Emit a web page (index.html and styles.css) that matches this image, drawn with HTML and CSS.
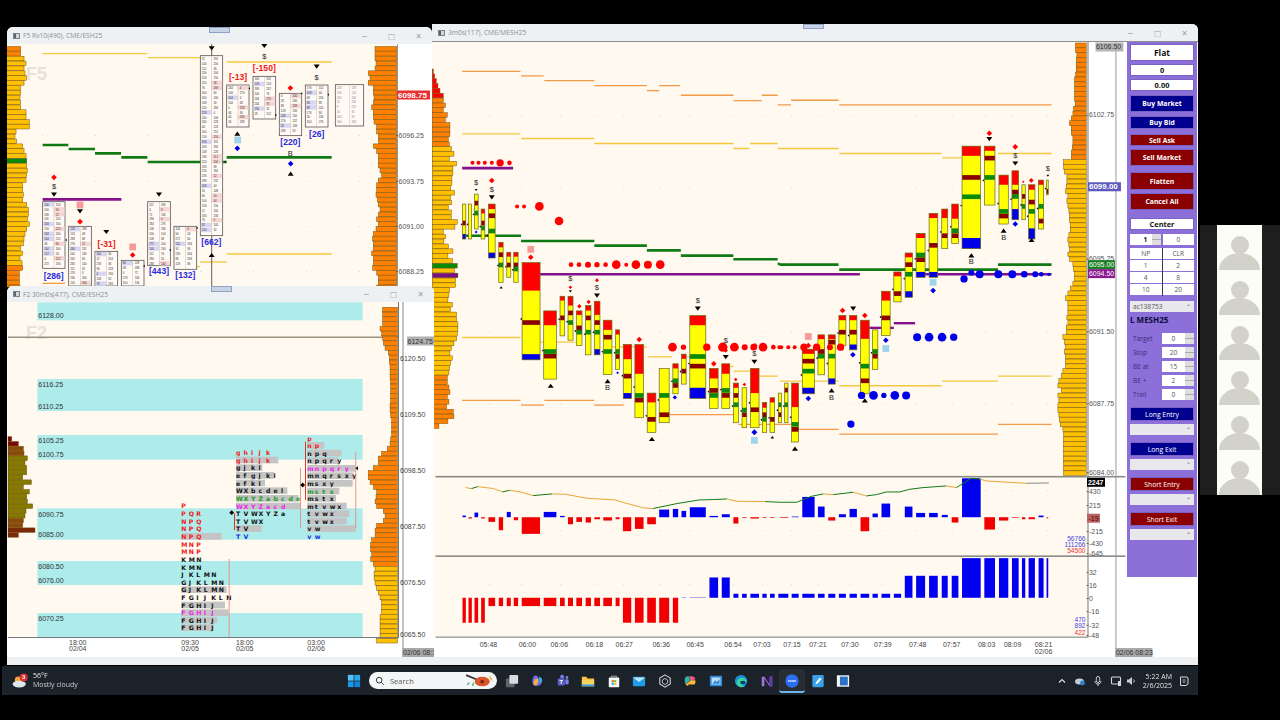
FILE: index.html
```html
<!DOCTYPE html>
<html lang="en">
<head>
<meta charset="utf-8">
<title>Trading workspace</title>
<link rel="stylesheet" href="styles.css">
</head>
<body>
<div class="screen">
  <div class="workspace">
    <section class="win win-main">
      <header class="title"><span class="win-ic"></span><span class="win-name">3m0s(117), CME/MESH25</span><span class="ctl">−</span><span class="ctl">□</span><span class="ctl">×</span><i class="grip"></i></header>
      <div class="win-body">
        <svg class="chart chart-main" id="chart-main" viewBox="432 41 695 616"></svg>
        <aside class="panel">
          <div class="box big">Flat</div>
          <div class="box mt3">0</div>
          <div class="box mt3">0.00</div>
          <div class="btn navy h17 mt4">Buy Market</div>
          <div class="btn navy h13 mt4">Buy Bid</div>
          <div class="btn wine h12 mt5">Sell Ask</div>
          <div class="btn wine h17 mt3">Sell Market</div>
          <div class="btn wine h18 mt6">Flatten</div>
          <div class="btn wine h17 mt3">Cancel All</div>
          <div class="box mt8">Center</div>
          <div class="qty mt4"><div class="cell strong">1<span class="spin"></span></div><div class="cell">0</div></div>
          <div class="qtygrid mt2">
            <div class="cell">NP</div><div class="cell">CLR</div>
            <div class="cell">1</div><div class="cell">2</div>
            <div class="cell">4</div><div class="cell">8</div>
            <div class="cell">10</div><div class="cell">20</div>
          </div>
          <div class="select mt5">ac138753<span class="caret">⌄</span></div>
          <div class="symbol mt3">L MESH25</div>
          <div class="params mt8">
            <div class="param"><label>Target</label><div class="num">0<span class="spin"></span></div></div>
            <div class="param"><label>Stop</label><div class="num">20<span class="spin"></span></div></div>
            <div class="param"><label>BE at</label><div class="num">15<span class="spin"></span></div></div>
            <div class="param"><label>BE +</label><div class="num">2<span class="spin"></span></div></div>
            <div class="param"><label>Trail</label><div class="num">0<span class="spin"></span></div></div>
          </div>
          <div class="btn plain navy h14 mt7">Long Entry</div>
          <div class="select mt3"><span class="caret">⌄</span></div>
          <div class="btn plain navy h14 mt7">Long Exit</div>
          <div class="select mt3"><span class="caret">⌄</span></div>
          <div class="btn plain wine h14 mt7">Short Entry</div>
          <div class="select mt3"><span class="caret">⌄</span></div>
          <div class="btn plain wine h14 mt7">Short Exit</div>
          <div class="select mt3"><span class="caret">⌄</span></div>
        </aside>
      </div>
      <div class="hscroll"></div>
    </section>

    <section class="win win-f5">
      <header class="title"><span class="win-ic"></span><span class="win-name">F5 Rv10(490), CME/ESH25</span><span class="ctl">−</span><span class="ctl">□</span><span class="ctl">×</span><i class="grip"></i></header>
      <svg class="chart chart-f5" id="chart-f5" viewBox="7 44 425 243"></svg>
    </section>

    <section class="win win-f2">
      <header class="title"><span class="win-ic"></span><span class="win-name">F2 30m0s(477), CME/ESH25</span><span class="ctl">−</span><span class="ctl">□</span><span class="ctl">×</span><i class="grip"></i></header>
      <svg class="chart chart-f2" id="chart-f2" viewBox="7 302 427 355"></svg>
      <div class="hscroll"></div>
    </section>
  </div>

  <footer class="taskbar">
    <div class="weather">
      <svg class="wx-ic" viewBox="0 0 20 18"><circle cx="7" cy="8" r="4" fill="#f2a93b"/><ellipse cx="8" cy="12.500" rx="7.500" ry="3.800" fill="#dfe6ee"/><circle cx="13" cy="5" r="4.500" fill="#d8322e"/><text x="13" y="7.300" class="wx-badge">3</text></svg>
      <div class="wx-text"><span>56°F</span><span class="dim">Mostly cloudy</span></div>
    </div>
    <div class="center-icons">
      <svg class="tb win-logo" viewBox="0 0 16 16"><rect x="1" y="1" width="6.600" height="6.600" fill="#4fc3f7"/><rect x="8.400" y="1" width="6.600" height="6.600" fill="#29a8ee"/><rect x="1" y="8.400" width="6.600" height="6.600" fill="#1e96e6"/><rect x="8.400" y="8.400" width="6.600" height="6.600" fill="#1484d8"/></svg>
      <div class="search">
        <svg class="mag" viewBox="0 0 12 12"><circle cx="5" cy="5" r="3.400" fill="none" stroke="#333" stroke-width="1.200"/><path d="M7.500 7.500 10.500 10.500" stroke="#333" stroke-width="1.200"/></svg>
        <span>Search</span>
        <svg class="doodle" viewBox="0 0 28 14"><path d="M2 2 12 6" stroke="#333" stroke-width="1.600"/><ellipse cx="17" cy="8" rx="7" ry="4.400" fill="#d9572b"/><circle cx="17" cy="8" r="1.800" fill="#7a2b12"/><path d="M3 11l2-2M8 12l1-3" stroke="#3a7" stroke-width="1.200"/><path d="M24 3l2 4" stroke="#f0b13c" stroke-width="1.400"/></svg>
      </div>
      <svg class="tb" viewBox="0 0 16 16"><rect x="1" y="5" width="10" height="10" rx="1" fill="#5e6368"/><rect x="5" y="1" width="10" height="10" rx="1" fill="#d8dadd"/></svg>
      <svg class="tb" viewBox="0 0 16 16"><path d="M5 2c3-1 4 1 5 4l2-2c3 2 2 6 0 8-2 2-5 2-7 1C2 12 2 5 5 2z" fill="#7a6cf0"/><path d="M4 11c0-4 2-6 5-6 1 3 0 7-3 8-1 0-2-1-2-2z" fill="#f2b13b"/><path d="M10 3c2 0 4 2 4 5l-3 2z" fill="#2bb3d6"/></svg>
      <svg class="tb" viewBox="0 0 16 16"><rect x="2" y="5" width="8" height="8" rx="1" fill="#5b5fc7"/><circle cx="7" cy="3" r="2.200" fill="#7b83eb"/><circle cx="12.500" cy="4" r="1.600" fill="#7b83eb"/><rect x="10.500" y="6" width="4" height="6" rx="1.600" fill="#7b83eb"/><text x="6" y="11.500" class="tb-letter">T</text></svg>
      <svg class="tb" viewBox="0 0 16 16"><path d="M1 3h5l1.600 2H15v9H1z" fill="#f6c343"/><rect x="1" y="7" width="14" height="7" fill="#fbd35c"/><rect x="1" y="12" width="14" height="2" fill="#2a9df4"/></svg>
      <svg class="tb" viewBox="0 0 16 16"><path d="M5 4V2.500h6V4" fill="none" stroke="#bbb" stroke-width="1"/><rect x="2" y="4" width="12" height="11" rx="1" fill="#f4f5f6"/><rect x="5.400" y="7" width="2.300" height="2.300" fill="#e8542a"/><rect x="8.300" y="7" width="2.300" height="2.300" fill="#7fba00"/><rect x="5.400" y="10" width="2.300" height="2.300" fill="#00a4ef"/><rect x="8.300" y="10" width="2.300" height="2.300" fill="#ffb900"/></svg>
      <svg class="tb" viewBox="0 0 16 16"><rect x="1" y="3" width="14" height="11" rx="1.400" fill="#1f9de8"/><path d="M1 4l7 5 7-5" fill="#bfe6fb"/></svg>
      <svg class="tb" viewBox="0 0 16 16"><path d="M8 1l6 3.500v7L8 15l-6-3.500v-7z" fill="none" stroke="#cfd3d8" stroke-width="1.200"/><path d="M8 5l3 1.800v3.400L8 12 5 10.200V6.800z" fill="none" stroke="#cfd3d8" stroke-width="1"/></svg>
      <svg class="tb" viewBox="0 0 16 16"><path d="M2 6c0-3 3-4 5-3l1 4-5 5c-1-2-1-4-1-6z" fill="#2fb4a7"/><path d="M7 3c3-1 7 0 7 3l-5 2z" fill="#f05a7e"/><path d="M3 12l6-5 5 0c1 3-1 7-5 7-3 0-5-1-6-2z" fill="#f6b73c"/><rect x="6" y="12" width="8" height="2.400" fill="#222"/></svg>
      <svg class="tb" viewBox="0 0 16 16"><rect x="1" y="2" width="14" height="12" rx="1" fill="#2e88d8"/><rect x="3" y="4" width="10" height="8" fill="#bcdcf5"/><path d="M4 11l3-4 2 2 3-3v5z" fill="#2e88d8"/></svg>
      <svg class="tb" viewBox="0 0 16 16"><circle cx="8" cy="8" r="7" fill="#1c8ed8"/><path d="M3 9c1-4 5-6 9-4 2 1 3 3 3 4-2-1-5-1-6 1s1 4 4 4c-1 1-3 1-4 1-4 0-6-3-6-6z" fill="#38d39f"/><ellipse cx="10" cy="9.600" rx="3" ry="1.800" fill="#0b3a66"/></svg>
      <svg class="tb" viewBox="0 0 16 16"><path d="M2 3h3l6 9V3h3v11h-3L5 5v9H2z" fill="#a06fd8"/><path d="M11 3l3-1v12l-3 1z" fill="#5e3aa8"/></svg>
      <div class="tb-active"><svg class="tb" viewBox="0 0 16 16"><circle cx="8" cy="8" r="7.600" fill="#2d6df0"/><text x="8" y="9.400" class="tb-zoom">zoom</text></svg></div>
      <svg class="tb" viewBox="0 0 16 16"><rect x="1.500" y="1" width="13" height="14" rx="1.500" fill="#3aa0e8"/><path d="M5 12l1-3 4-5 2 1.600-4 5z" fill="#fff"/></svg>
      <svg class="tb" viewBox="0 0 16 16"><rect x="1" y="1.500" width="14" height="13" fill="#f6f7f8"/><rect x="4.500" y="3" width="9" height="10" fill="#2a74c8"/></svg>
    </div>
    <div class="tray">
      <svg class="tr-ic" viewBox="0 0 12 12"><path d="M3 7.500 6 4.500 9 7.500" fill="none" stroke="#ddd" stroke-width="1.200"/></svg>
      <svg class="tr-ic" viewBox="0 0 12 12"><ellipse cx="5.500" cy="6.500" rx="4.500" ry="3" fill="#c6cbd1"/><circle cx="8.500" cy="8" r="2.400" fill="#2a84d2"/></svg>
      <svg class="tr-ic" viewBox="0 0 12 12"><rect x="4.300" y="1.500" width="3.400" height="6" rx="1.700" fill="none" stroke="#c9ced4" stroke-width="1"/><path d="M3 6c0 4 6 4 6 0M6 9v2" fill="none" stroke="#c9ced4" stroke-width="1"/></svg>
      <svg class="tr-ic" viewBox="0 0 12 12"><rect x="1.500" y="2" width="9" height="7" rx="1" fill="none" stroke="#d5d9de" stroke-width="1.100"/><rect x="8" y="6" width="3" height="5" fill="#d5d9de"/></svg>
      <svg class="tr-ic narrow" viewBox="0 0 12 12"><path d="M2 4.500h2l3-2.500v8l-3-2.500H2z" fill="#c9ced4"/><path d="M8.500 4.500c1 1 1 2 0 3" fill="none" stroke="#c9ced4"/></svg>
      <div class="clock"><span>5:22 AM</span><span>2/6/2025</span></div>
      <svg class="tr-ic" viewBox="0 0 12 12"><path d="M2.500 2h6.500l1 1v6l-2 1.500h-5.500z" fill="none" stroke="#d5d9de" stroke-width="1"/><path d="M4.500 5h3M4.500 7h3" stroke="#d5d9de" stroke-width=".8"/></svg>
    </div>
  </footer>

  <div class="gallery">
    <div class="tile"><i class="head"></i><i class="body-shape"></i></div>
    <div class="tile"><i class="head"></i><i class="body-shape"></i></div>
    <div class="tile"><i class="head"></i><i class="body-shape"></i></div>
    <div class="tile"><i class="head"></i><i class="body-shape"></i></div>
    <div class="tile"><i class="head"></i><i class="body-shape"></i></div>
    <div class="tile"><i class="head"></i><i class="body-shape"></i></div>
  </div>
</div>
<script src="charts.js"></script>
</body>
</html>
```

FILE: styles.css
```css
* { box-sizing: border-box; }
html, body { margin: 0; height: 100%; background: #000; overflow: hidden; }
body { font-family: "Open Sans", "Liberation Sans", sans-serif; }

.screen { position: relative; width: 1280px; height: 720px; padding-top: 24px; filter: blur(.4px); }
.workspace { position: relative; width: 1198px; height: 642px; }

.win { position: absolute; display: flex; flex-direction: column; background: #fff; overflow: hidden; }
.win-main { left: 432px; top: 0; width: 766px; height: 641px; border-radius: 0 6px 0 0; }
.win-f5 { left: 7px; top: 3px; width: 425px; height: 260px; border-radius: 6px 6px 0 0; }
.win-f2 { left: 7px; top: 262px; width: 427px; height: 379px; border-radius: 6px 6px 0 0; }

.title { position: relative; flex: none; display: flex; align-items: center; height: 17px; padding-left: 6px; background: #eef1f3; color: #8b8f93; font-size: 6.700px; }
.win-main .title { border-bottom: 1.500px solid #8e8e8e; height: 18px; }
.win-f2 .title { height: 16px; }
.win-ic { width: 7px; height: 6px; margin-right: 3px; background: linear-gradient(90deg, #55686f 45%, #cfd6da 45%); border: 1px solid #7b8488; }
.win-name { flex: 1; }
.ctl { width: 27px; text-align: center; font-size: 10px; line-height: 1; color: #9a9da0; }
.grip { position: absolute; top: 0; left: 202px; width: 21px; height: 6px; background: #c9d3e6; border: 1px solid #8fa0c4; }
.win-main .grip { left: 371px; height: 5px; }
.win-f2 .grip { left: 204px; }

.win-body { position: relative; display: flex; flex: 1; min-height: 0; }
.chart { display: block; overflow: visible; flex: none; background: #fff; }
.chart-main { width: 695px; height: 615px; }
.chart-f5 { width: 425px; height: 243px; }
.chart-f2 { width: 427px; height: 355px; }
.chart text { font-family: "Liberation Sans", sans-serif; }
.chart text.tpo { font-family: "DejaVu Sans", sans-serif; font-weight: 700; font-size: 6.200px; }
.hscroll { flex: none; height: 8px; background: #eef0f1; }

.panel { flex: none; display: flex; flex-direction: column; width: 70px; height: 535px; padding: 2px 3px 0; background: #8c6fd9; font-size: 7px; }
.mt2 { margin-top: 2px; } .mt3 { margin-top: 3px; } .mt4 { margin-top: 4px; } .mt5 { margin-top: 5px; }
.mt6 { margin-top: 6px; } .mt7 { margin-top: 7px; } .mt8 { margin-top: 8px; }
.h12 { height: 12px; } .h13 { height: 13px; } .h14 { height: 14px; } .h17 { height: 17px; } .h18 { height: 18px; }
.box { display: flex; align-items: center; justify-content: center; height: 12px; background: #fff; border: 1px solid #7a62c4; color: #111; font-weight: 700; font-size: 7.400px; }
.box.big { height: 17px; font-size: 8.500px; }
.btn { display: flex; align-items: center; justify-content: center; color: #fff; font-weight: 700; font-size: 6.800px; border: 1px solid #7a62c4; }
.btn.plain { font-weight: 400; }
.navy { background: #00008f; }
.wine { background: #8b0000; }
.qty { display: grid; grid-template-columns: 1fr 1fr; column-gap: 2px; height: 12px; }
.qtygrid { display: grid; grid-template-columns: 1fr 1fr; grid-auto-rows: 12px; column-gap: 1px; background: #3a3a5a; border-radius: 1px; }
.cell { position: relative; display: flex; align-items: center; justify-content: center; background: #fff; border-bottom: 1px solid #8c6fd9; color: #555; font-size: 6.600px; }
.cell.strong { color: #111; font-weight: 700; }
.spin { position: absolute; right: 0; top: 0; bottom: 0; width: 9px; background: linear-gradient(#dedede 0 48%, #aaa 48% 54%, #dedede 54%); }
.select { position: relative; display: flex; align-items: center; height: 11px; padding-left: 3px; background: #e8e8ec; color: #555; font-size: 6.600px; }
.caret { position: absolute; right: 3px; top: -1px; font-size: 6px; color: #666; }
.symbol { height: 10px; line-height: 10px; color: #0c0c3a; font-weight: 700; font-size: 8px; }
.params { display: flex; flex-direction: column; gap: 3px; }
.param { display: flex; align-items: center; justify-content: space-between; height: 11px; padding-left: 3px; color: #3c2d78; font-size: 6.600px; }
.num { position: relative; width: 32px; height: 11px; padding-right: 9px; background: #fff; color: #555; text-align: center; line-height: 11px; }

.taskbar { display: flex; align-items: center; justify-content: space-between; width: 1196px; height: 29px; margin-left: 2px; padding-right: 8px; background: #1c2229; color: #e6e8ea; font-size: 7px; position: relative; }
.weather { display: flex; align-items: center; gap: 3px; width: 345px; padding-left: 10px; }
.wx-ic { width: 18px; height: 16px; }
.wx-badge { font: 700 6.500px "Liberation Sans", sans-serif; fill: #fff; text-anchor: middle; }
.wx-text { display: flex; flex-direction: column; line-height: 8.500px; }
.dim { color: #c8ccd0; }
.center-icons { display: flex; align-items: center; gap: 11.500px; flex: none; }
.tb { display: block; width: 14px; height: 14px; flex: none; }
.win-logo { margin-right: -3.500px; }
.search { display: flex; align-items: center; width: 128px; height: 17px; margin-right: -4px; padding: 0 3px 0 6px; border-radius: 9px; background: #f4f5f6; color: #555; font-size: 7.500px; }
.mag { width: 10px; height: 10px; margin-right: 5px; }
.search span { flex: 1; }
.doodle { width: 30px; height: 15px; }
.tb-letter { font: 700 6.500px "Liberation Sans", sans-serif; fill: #fff; text-anchor: middle; }
.tb-zoom { font: 700 3.600px "Liberation Sans", sans-serif; fill: #fff; text-anchor: middle; }
.tb-active { position: relative; padding: 5px 6px 3px; margin: 0 -6px; background: #272d33; border-radius: 3px; border-bottom: 2px solid #6fb4ea; }
.tray { display: flex; align-items: center; gap: 6px; margin-left: auto; }
.tr-ic { width: 12px; height: 12px; flex: none; }
.tr-ic.narrow { margin-left: -3px; }
.clock { display: flex; flex-direction: column; align-items: flex-end; line-height: 9px; color: #dfe2e5; font-size: 7px; }

.gallery { position: absolute; left: 1200px; top: 225px; width: 80px; height: 270px; padding-left: 17px; background: #1e1e1e; }
.tile { position: relative; width: 45px; height: 45px; background: #fdfdf7; overflow: hidden; }
.head { position: absolute; left: 14px; top: 11px; width: 18px; height: 18px; border-radius: 50%; background: #d2d2ca; }
.body-shape { position: absolute; left: 2px; top: 28px; width: 41px; height: 30px; border-radius: 50% 50% 0 0 / 56% 56% 0 0; background: #d2d2ca; }
```

FILE: charts.js
```js
// Draws the three charts from their data tables. All coordinates are given in the
// reference's own 3x scale relative to a zone origin, or in plain page pixels.
const Y = '#ffff00', R = '#ff0000', M = '#8b0000', G = '#0a8a0a', B = '#0000e6';
const ORG = '#ff8000', GLD = '#ffc000', BG = '#fff9f0';
const LO = '#f29a48', LY = '#f6c840', LG = '#0f7a14', LP = '#85108c';
const zone = (ox, oy) => ({ x: v => +(ox + v / 3).toFixed(2), y: v => +(oy + v / 3).toFixed(2), s: v => +(v / 3).toFixed(2) });
const Z1 = zone(0, 20), Z2 = zone(0, 285), Z3 = zone(430, 20), Z4 = zone(780, 20),
      Z5 = zone(430, 250), Z6 = zone(780, 250), Z7 = zone(430, 470), Z8 = zone(780, 470);

const rect = (x, y, w, h, f, st, sw = .5) => `<rect x="${x}" y="${y}" width="${w}" height="${h}" fill="${f}"${st ? ` stroke="${st}" stroke-width="${sw}"` : ''}/>`;
const txt = (x, y, s, size, f, o = {}) => `<text x="${x}" y="${y}" font-size="${size}" fill="${f}"${o.b ? ' font-weight="700"' : ''}${o.a ? ` text-anchor="${o.a}"` : ''}>${s}</text>`;
const line = (x1, y1, x2, y2, c, w) => `<line x1="${x1}" y1="${y1}" x2="${x2}" y2="${y2}" stroke="${c}" stroke-width="${w}"/>`;
const hl = (z, list, c, w) => list.map(([a, b, y]) => line(z.x(a), z.y(y), z.x(b), z.y(y), c, w)).join('');
const dots = (z, list, c) => list.map(([x, y, r]) => `<circle cx="${z.x(x)}" cy="${z.y(y)}" r="${z.s(r + 1)}" fill="${c}"/>`).join('');
const poly = (pts, f) => `<polygon points="${pts.map(p => p.join(',')).join(' ')}" fill="${f}"/>`;
const dia = (z, list, c, size = 2.8) => list.map(([x, y, s]) => { const r = s || size, X = z.x(x), Y0 = z.y(y); return poly([[X, Y0 - r], [X + r, Y0], [X, Y0 + r], [X - r, Y0]], c); }).join('');
const up = (z, list, size = 3) => list.map(([x, y, s]) => { const r = s || size, X = z.x(x), Y0 = z.y(y); return poly([[X - r, Y0 + r * .7], [X + r, Y0 + r * .7], [X, Y0 - r * .7]], '#000'); }).join('');
const down = (z, list, size = 3) => list.map(([x, y, s]) => { const r = s || size, X = z.x(x), Y0 = z.y(y); return poly([[X - r, Y0 - r * .7], [X + r, Y0 - r * .7], [X, Y0 + r * .7]], '#000'); }).join('');
const sq = (z, list, c, r = 3.4) => list.map(([x, y]) => rect(z.x(x) - r, z.y(y) - r, 2 * r, 2 * r, c)).join('');
const mark = (z, list, s) => list.map(([x, y]) => txt(z.x(x), z.y(y) + 2.8, s, 7.5, '#222', { a: 'middle' })).join('');
const grid = (xs, ys) => ys.map(y => xs.map(x => rect(x, y, 1, 1, '#d9d6cf')).join('')).join('');

function candle(z, [x1, x2, t, b, red, blue, mar = [], grn = []]) {
  const X = z.x(x1), W = z.s(x2 - x1), band = (y, h, c) => rect(X, z.y(y), W, z.s(h), c);
  let s = rect(X, z.y(t), W, z.s(b - t), Y);
  if (red) s += band(t, red - t, R);
  if (blue) s += band(blue, b - blue, B);
  mar.forEach(y => s += band(y, 14, M));
  grn.forEach(y => s += band(y, 14, G));
  s += rect(X, z.y(t), W, z.s(b - t), 'none', '#6a6820', .7);
  const my = z.y(t + (b - t) * .58);
  s += poly([[X - 2, my], [X - .4, my - 1.2], [X - .4, my + 1.2]], '#000');
  return s;
}

const PS = '#6a4a00';
function barsFromLeft(x0, y0, step, edges, scale, color) {
  return edges.map((e, i) => rect(x0, +(y0 + i * step).toFixed(2), +(e * scale).toFixed(2), +(step - .3).toFixed(2), color(i), PS, .45)).join('');
}
function barsFromRight(xr, y0, step, widths, color) {
  return widths.map((w, i) => { const px = +(w / 3).toFixed(2); return rect(+(xr - px).toFixed(2), +(y0 + i * step).toFixed(2), px, +(step - .3).toFixed(2), color(i), PS, .45); }).join('');
}
const pxBox = (x, y, w, s, bg, fg, o = {}) => rect(x, y - 4.5, w, 9, bg) + txt(x + 1, y + 2.5, s, o.size || 7, fg, o);
const axisLabel = (x, y, s) => rect(x - 2, y, 2, .8, '#555') + txt(x + .5, y + 2.5, s, 7, '#555');

/* ---------------- main chart ---------------- */
function drawMain() {
  let s = rect(432, 41, 695, 616, '#fff') + rect(432, 41, 656, 596, BG);

  // left volume profile
  const lp = [8,12,17,22,28,38, 38,44,38,50,44,58,58,58,53,56, 62,70,56,78,67,67,64,64,60,72,60,63,53,62,62,80,73,38,45,40,53,67,
    52,65,80,72,82,75,75,57,55,52,65,60,78,78,82,82,80,78,70,62,58,65,60,57,55, 50,50,55,58,50,55,48,68,70,52,25];
  s += barsFromLeft(431.7, 68, 4.87, lp.map(e => e - 5), 1 / 3, i => i < 6 ? '#ff0000' : i < 16 ? ORG : i === 40 ? G : i === 42 ? '#7a0f88' : i < 63 ? GLD : ORG);

  // right volume profile
  const rp = [888,888,892,890,890,890,888,885,885,885,885,885,887,882,880,875,870,875,875,880,880,878,875,875,
    852,852,855,862,862,860,858,865,862,865,868,870,870,872,872,868,865, 868,870,865,870,880,882,885,885,880,872,865,858,865,865,865,862,865,860,860,850,855,858,855,858,858,858,850,845,838,835,845,835,838,835,835,838,840,842,850,852,852,852,852,852,852,852,852,852].map(e => 920 - e);
  s += barsFromRight(1086.7, 42, 4.87, rp, i => i < 24 ? ORG : GLD);

  const xs = [489, 521, 560, 594, 623, 659, 689, 733, 762, 791, 818, 850, 882, 916, 952, 985, 1012, 1047];
  s += grid(xs, [114, 186, 258, 331, 403, 490, 530, 584]);

  // levels
  s += hl(Z3, [[95,270,151],[272,340,165],[342,492,179],[492,650,194],[650,687,209],[687,750,194],[752,910,223],[910,995,239],[995,1043,223],[1043,1050,252]], LO, 1.3);
  s += hl(Z4, [[0,33,252],[33,176,238],[178,816,252]], LO, 1.3);
  s += hl(Z3, [[95,270,339],[272,492,353],[492,910,368],[910,958,383],[960,1043,368],[1043,1050,383]], LY, 1.3);
  s += hl(Z4, [[0,176,383],[178,485,398],[487,545,411],[655,816,398]], LY, 1.3);
  s += hl(Z5, [[95,270,261],[330,435,275],[545,650,289],[652,725,319],[770,779,319],[900,910,348],[910,960,362],[985,1043,377]], LY, 1.3);
  s += hl(Z6, [[0,176,392],[178,485,406],[487,655,392],[655,816,377]], LY, 1.3);
  s += hl(Z5, [[95,270,450],[272,340,464],[342,492,450],[492,580,464],[717,910,493],[925,1050,522]], LO, 1.3);
  s += hl(Z6, [[0,35,522],[56,176,537],[178,655,551],[655,816,522]], LO, 1.3);
  s += hl(Z3, [[100,175,645],[194,272,645],[272,492,661],[492,650,675],[650,752,689],[752,910,705],[910,1043,716],[1043,1050,730]], LG, 2.6);
  s += hl(Z6, [[0,176,42],[178,655,57],[655,816,42]], LG, 2.6);
  s += hl(Z3, [[95,248,442]], LP, 2.6);
  s += hl(Z5, [[329,1050,71]], LP, 2.4);
  s += hl(Z6, [[0,240,71],[266,342,232],[342,406,218],[436,816,71]], LP, 2.4);

  // candles
  [[96,106,550,655,0,640,[600],[]],[114,123,550,655,0,0,[],[]],[132,143,520,625,0,0,[540],[570]],
   [152,163,565,655,578,0,[600],[615]],[174,194,550,712,565,696,[578],[624]]].forEach(c => s += candle(Z3, c));
  [[205,218,-25,95,-10,0,[5],[36]],[229,241,5,80,18,0,[36],[]],[250,263,5,95,18,0,[36],[48]],
   [275,329,36,328,120,311,[209],[]],[340,378,181,386,224,0,[310],[296]],[389,403,137,256,150,0,[195],[]],
   [413,428,137,269,165,0,[180],[209]],[438,455,181,285,193,0,[225],[238]],[466,482,165,313,180,0,[195],[238]],
   [492,509,152,313,193,296,[209],[238]],[519,545,209,372,238,0,[253],[296]],[556,568,238,357,252,0,[311],[296]],
   [579,604,282,444,326,428,[370],[]],[614,640,282,502,370,0,[442],[428]],[651,677,428,546,456,0,[500],[]],
   [687,717,354,517,0,0,[486],[428]],[728,744,340,430,354,0,[398],[384]],[754,768,311,401,325,0,[355],[]],
   [779,827,195,444,224,412,[340],[311]],[838,864,354,474,384,0,[413],[428]],[875,899,340,474,370,0,[428],[413]],
   [910,925,398,517,412,0,[428],[456]],[936,950,412,532,0,0,[486],[472]],[961,987,354,532,428,0,[471],[]],
   [997,1010,456,546,472,0,[486],[500]],[1020,1034,442,546,456,0,[500],[]]].forEach(c => s += candle(Z5, c));
  [[-5,4,428,517,0,0,[486],[456]],[14,24,398,517,0,0,[412],[456]],[35,56,398,575,470,0,[530],[515]],
   [67,104,296,430,310,412,[325],[355]],[114,134,253,373,266,0,[296],[310]],[145,166,253,401,266,384,[268],[310]],
   [177,198,195,285,209,0,[238],[]],[209,231,195,298,209,282,[238],[]],[242,268,209,430,265,0,[384],[340]],
   [278,294,238,357,0,0,[310],[296]],[305,331,122,255,150,0,[195],[]],[342,364,64,154,77,0,[122],[]],
   [376,398,7,140,20,122,[35],[64]]].forEach(c => s += candle(Z6, c));
  [[409,436,638,770,652,754,[710],[696]],[448,474,578,770,592,754,[667],[]],[486,504,565,684,592,0,[638],[]],
   [516,536,550,668,594,0,[638],[623]],[547,603,376,684,405,652,[463],[521]],[614,646,376,553,390,0,[405],[463]],
   [658,686,463,610,492,0,[579],[565]],[697,717,450,597,492,565,[507],[520]],[727,737,492,597,0,0,[520],[550]],
   [747,766,492,655,507,623,[537],[565]],[777,792,478,625,492,0,[594],[550]],[801,806,478,522,0,0,[505],[]]].forEach(c => s += candle(Z4, c));

  // signals
  s += dots(Z3, [[126,426,5],[144,426,5],[163,426,5],[184,426,5],[209,426,10],[237,426,6],[260,557,5],[281,557,5],[327,557,12],[386,601,12]], R);
  s += dots(Z5, [[422,42,6],[446,42,6],[473,42,8],[500,42,7],[526,42,6],[558,42,12],[588,42,5],[617,42,12],[653,42,11],[690,42,12],
    [727,290,12],[760,290,7],[830,290,10],[878,290,13],[913,290,12],[944,290,8],[971,290,9],[999,290,12],[1030,290,6],[1048,290,5]], R);
  s += dots(Z6, [[4,290,5],[25,290,5],[44,290,5],[72,290,10],[110,290,10],[150,290,8],[182,290,10]], R);
  s += dots(Z6, [[245,435,10],[281,435,12],[312,435,7],[345,435,12],[379,435,11],[213,521,10],[412,260,11],[448,260,12],[487,260,12],[522,260,10],
    [553,85,10],[575,66,8],[600,71,11],[656,71,11],[698,71,11],[734,71,9],[767,71,8],[785,71,6],[808,71,4]], B);
  s += dia(Z3, [[184,479],[301,710]], R);
  s += dia(Z5, [[420,110,1.8],[500,89,2],[447,167,2.2],[475,154,2.2],[627,267],[851,340],[887,300,2.2],[917,387,1.8],[943,402,1.8],[975,285,2.6]], R);
  s += dia(Z4, [[629,337],[707,378],[755,479,2.4],[731,483,1.2]], R);
  s += dia(Z6, [[188,180],[255,195],[85,285]], R);
  s += dia(Z5, [[734,441,2.2],[562,367,1.4],[973,546,3]], B);
  s += dia(Z6, [[85,444],[219,313],[318,269],[460,120]], B);
  s += dia(Z4, [[707,610]], B);
  s += dia(Z3, [[137,634,1.4]], B);
  s += sq(Z3, [[301,686]], '#f59a9a') + sq(Z6, [[85,258]], '#f59a9a');
  s += sq(Z5, [[973,570]], '#9ed4ee') + sq(Z6, [[318,294],[460,95]], '#9ed4ee');
  s += mark(Z3, [[137,485],[184,505]], '$') + mark(Z5, [[420,82],[500,111],[803,148],[887,270],[973,308]], '$') + mark(Z4, [[707,403],[805,441]], '$');
  s += mark(Z5, [[532,410]], 'B') + mark(Z6, [[155,440],[575,33]], 'B') + mark(Z4, [[672,651]], 'B');
  s += up(Z5, [[212,110,1.6],[361,406],[532,392],[665,566],[1027,561,1.8]]) + up(Z6, [[45,595],[155,420],[255,450],[575,14]]) + up(Z4, [[672,630],[756,658]]);
  s += down(Z3, [[137,508,1.4],[184,530]]) + down(Z5, [[420,122,1.6],[500,135],[803,174],[887,320],[973,334]]) + down(Z4, [[629,355],[707,428],[805,465,1.4]]) + down(Z6, [[220,174]]);

  // delta pane
  const delta = (z, blues, reds, base) => blues.map(([a, b, t]) => rect(z.x(a), z.y(t), z.s(b - a), z.s(base - t), '#0000f0')).join('') +
    reds.map(([a, b, e]) => rect(z.x(a), z.y(base), z.s(b - a), z.s(e - base), '#f00000')).join('');
  s += delta(Z7, [[96,106,136],[132,143,127],[229,241,125],[340,378,125],[389,403,137],[687,717,118],[728,744,116],[754,768,122],[779,827,111],[838,864,137],[875,899,132]],
    [[114,124,145],[152,163,145],[174,194,155],[205,218,180],[250,263,150],[274,329,191],[413,428,162],[438,455,155],[466,482,157],[492,509,147],[519,545,151],[556,568,147],[578,603,183],[614,640,176],[651,677,162],[910,925,160],[936,950,143],[961,987,145],[997,1010,143],[1020,1034,143]], 141);
  s += delta(Z8, [[35,56,139],[67,104,80],[114,134,109],[177,198,132],[209,231,116],[278,294,130],[305,331,100],[375,398,109],[409,436,128],[448,474,128],[486,504,134],[547,603,24],[777,792,136]],
    [[0,25,143],[145,166,151],[242,268,183],[516,536,157],[614,646,178],[658,686,151],[697,717,143],[727,737,147],[747,766,147],[801,806,144]], 141);
  const path = (z, pts, c) => `<polyline points="${pts.map(([x, y]) => z.x(x) + ',' + z.y(y)).join(' ')}" fill="none" stroke="${c}" stroke-width="1"/>`;
  s += path(Z7, [[105,52],[123,55]], '#e8a63a') + path(Z7, [[123,55],[142,49]], LG) + path(Z7, [[142,49],[190,55],[216,65]], '#e8a63a') + path(Z7, [[216,65],[238,60]], LG) +
    path(Z7, [[238,60],[270,65],[308,76]], '#e8a63a') + path(Z7, [[308,76],[365,71]], LG) + path(Z7, [[365,71],[405,72],[470,84],[555,89],[580,97],[640,113],[668,115]], '#e8a63a') +
    path(Z7, [[668,115],[740,100],[808,89],[850,88],[890,86]], LG) + path(Z7, [[890,86],[920,93],[1005,94]], '#e8a63a') + path(Z7, [[1005,94],[1050,96]], LG);
  s += path(Z8, [[0,96],[50,96],[95,78],[130,71]], LG) + path(Z8, [[130,71],[160,73]], '#e8a63a') + path(Z8, [[160,73],[220,66]], LG) + path(Z8, [[220,66],[260,77]], '#e8a63a') +
    path(Z8, [[260,77],[290,73],[320,65],[360,65],[390,57],[430,52],[500,47]], LG) + path(Z8, [[500,47],[530,52]], '#e8a63a') + path(Z8, [[530,52],[575,24],[600,26]], LG) +
    path(Z8, [[600,26],[620,32],[740,39]], '#e8a63a') + path(Z8, [[740,39],[808,38]], '#888');

  // cumulative pane
  const R3 = [[96,106,458],[114,124,458],[132,143,458],[152,163,458],[174,194,408],[205,218,408],[229,241,408],[250,263,408],[274,329,408],[340,378,408],[389,403,408],[413,428,408],[438,455,408],[466,482,408],[492,509,408],[519,545,408],[556,568,408],[578,603,458],[614,640,458],[651,677,458],[687,717,458],[728,744,458]];
  s += delta(Z7, [[754,768,382],[779,827,382],[838,864,322],[875,899,322],[910,925,371],[936,950,371],[961,987,371],[997,1010,371],[1020,1034,371],[1045,1050,371]], R3, 383);
  s += delta(Z8, [[0,25,371],[35,56,371],[67,104,371],[114,134,371],[145,166,371],[177,198,371],[209,231,371],[242,268,371],[278,294,371],[305,331,371],[342,364,371],[375,398,317],[409,436,317],[448,474,317],[486,504,317],[516,536,317],[547,603,264],[614,646,264],[658,686,264],[697,717,264],[727,737,264],[747,766,264],[777,792,264],[801,806,264]], [], 383);

  // pane rules and axis
  s += rect(435, 475.6, 691, 1.6, '#8a8a84') + rect(435, 555.2, 691, 1.6, '#8a8a84') + rect(435, 636.6, 654, 1, '#777');
  s += rect(1088, 41, 1, 596, '#777') + rect(1116, 41, 1, 616, '#9a9a9a');
  s += [[114,'6102.75'],[258,'6095.25'],[331,'6091.50'],[403,'6087.75'],[472,'6084.00'],[491,'430'],[505,'215'],[531,'-215'],[543,'-430'],[553,'-645'],[572,'32'],[585,'16'],[598,'0'],[611,'-16'],[625,'-32'],[635,'-48']].map(([y, t]) => axisLabel(1089, y, t)).join('');
  s += rect(1096, 41.5, 28, 9, '#b4b4b4') + txt(1096.5, 48.5, '6106.50', 7, '#333');
  s += pxBox(1088.5, 186, 33, '6099.00', '#5a5abf', '#fff', { b: 1, size: 8 });
  s += pxBox(1088.5, 264, 27, '6095.00', '#1b7f24', '#fff', { size: 7 });
  s += pxBox(1088.5, 273, 27, '6094.50', '#8a1a90', '#fff', { size: 7 });
  s += rect(1087.5, 477.5, 18, 9, '#000') + txt(1088.5, 484.5, '2247', 7, '#fff', { b: 1 });
  s += rect(1087.5, 513.5, 13, 9, '#b96262') + txt(1089, 520.5, '-19', 7, '#400');
  s += txt(1086, 540.5, '56766', 6.6, '#4646e0', { a: 'end' }) + txt(1086, 547, '111266', 6.6, '#4646e0', { a: 'end' }) + txt(1086, 553, '54500', 6.6, '#f03030', { a: 'end' });
  s += txt(1086, 621.5, '470', 6.6, '#4646e0', { a: 'end' }) + txt(1086, 627.5, '892', 6.6, '#4646e0', { a: 'end' }) + txt(1086, 635, '422', 6.6, '#f03030', { a: 'end' });
  [[488,'05:48'],[527,'06:00'],[559,'06:06'],[594,'06:18'],[624,'06:27'],[661,'06:36'],[695,'06:45'],[733,'06:54'],[762,'07:03'],[792,'07:15'],[818,'07:21'],[850,'07:30'],[883,'07:39'],[918,'07:48'],[952,'07:57'],[987,'08:03'],[1013,'08:09'],[1044,'08:21']].forEach(([x, t]) => { s += txt(x, 647, t, 7, '#444', { a: 'middle' }); });
  s += txt(1044, 653.5, '02/06', 7, '#444', { a: 'middle' });
  s += rect(1116, 648, 37, 9, '#a8a8a8') + txt(1116.5, 655, '02/06 08:23', 7, '#333');
  document.getElementById('chart-main').innerHTML = s;
}

/* ---------------- F5 footprint chart ---------------- */
let seed = 7;
const rnd = n => (seed = (seed * 1103515245 + 12345) & 0x7fffffff) % n;
function footprint(z, x1, x2, y1, y2, faint) {
  const X = z.x(x1), W = z.s(x2 - x1), T = z.y(y1), H = z.s(y2 - y1);
  let s = rect(X, T, W, H, '#fffaf3', '#555', .8);
  const rows = Math.floor(H / 4.9), c = faint ? '#888' : '#333';
  for (let i = 0; i < rows; i++) {
    const y = T + .6 + i * 4.9, k = rnd(9);
    if (!faint && (k === 0 || k === 1)) s += rect(X + .5, y, W / 2 - .5, 4.4, '#d9d6f2');
    if (!faint && (k === 2 || k === 3)) s += rect(X + W / 2, y, W / 2 - .5, 4.4, '#f7d5d2');
    s += txt(+(X + 1.5).toFixed(1), +(y + 3.4).toFixed(1), rnd(300), 2.8, c);
    s += txt(+(X + W / 2 + 2).toFixed(1), +(y + 3.4).toFixed(1), rnd(300), 2.8, c);
  }
  return s + rect(X + W / 2, T, .3, H, '#999');
}
function drawF5() {
  let s = rect(7, 44, 425, 243, '#fff') + rect(7, 44, 390, 243, BG);
  const lp = [62,62,72,78,72,75,80,72,62,62,60,62,62,78,78,88,88,48,45,50,68,72,78,80,80,82,80,78,68,68,70,68,80,85,85,82,88,80,75,72,70,62,68,60,66,68,58,58,58,60,60,48];
  s += barsFromLeft(6.7, 46.5, 4.87, lp.map(e => e - 20), 1 / 3, i => i === 23 ? G : i < 2 || i > 44 ? ORG : GLD);
  const rp = [65,65,65,62,65,85,80,85,70,70,68,70,75,70,70,68,60,60,55,55,70,60,55,55,55,50,45,55,60,60,62,58,55,50,55,60,55,62,70,72,70,70,75,70,70,72,60,55,55,60];
  s += barsFromRight(396.7, 46.5, 4.87, rp, () => ORG);
  s += grid([42, 95, 148, 200, 253, 306, 359], [135, 181, 226, 271]);
  s += txt(26, 80, 'F5', 18, '#e6e2da', { b: 1 });
  s += hl(Z1, [[128,442,101],[443,600,113],[680,995,126],[680,995,702],[600,680,726],[522,600,740]], LY, 1.3) + hl(Z1, [[128,195,790]], LO, 1.3);
  s += hl(Z1, [[128,205,375],[206,285,387],[285,363,400],[364,442,412],[443,680,426],[680,995,412]], LG, 2.6) + hl(Z1, [[128,364,538]], LP, 2.6);
  [[128,195,545,745],[206,274,619,798],[285,353,694,798],[364,432,721,798],[443,511,545,737],[522,590,619,748],[680,747,195,321],[759,827,169,297],[838,905,220,347],[916,984,195,321]].forEach(b => s += footprint(Z1, ...b));
  s += footprint(Z1, 1006, 1091, 194, 318, true);
  s += line(211.7, 44, 211.7, 287, '#3a3a3a', .8);
  s += footprint(Z1, 601, 668, 107, 647);
  [[200,660],[434,738],[512,690],[593,624],[677,425],[750,205],[829,285],[907,220],[987,224]].forEach(([x, y]) => { const X = Z1.x(x), Yv = Z1.y(y); s += poly([[X - 1.5, Yv], [X, Yv - 1.2], [X, Yv + 1.2]], '#000'); });
  [[161,767,'[286]','#2a2ae0'],[320,671,'[-31]','#f02020'],[477,754,'[443]','#2a2ae0'],[556,766,'[132]','#2a2ae0'],[634,666,'[662]','#2a2ae0'],[714,172,'[-13]','#f02020'],[793,145,'[-150]','#f02020'],[871,367,'[220]','#2a2ae0'],[950,341,'[26]','#2a2ae0']].forEach(([x, y, t, c]) => { s += txt(Z1.x(x), Z1.y(y) + 3, t, 8.6, c, { a: 'middle', b: 1 }); });
  s += dia(Z1, [[162,472],[240,605],[398,705],[871,204]], R) + dia(Z1, [[712,385],[872,431]], B);
  s += sq(Z1, [[240,555],[398,681]], '#f59a9a') + sq(Z1, [[713,360]], '#9ed4ee');
  s += mark(Z1, [[162,499],[793,109],[950,172]], '$') + mark(Z1, [[871,401]], 'B');
  s += down(Z1, [[162,524],[240,574],[319,636],[477,524],[635,85],[793,78],[950,140]]) + up(Z1, [[712,341],[872,461],[635,705]]);
  s += rect(397, 44, 1, 243, '#999');
  [[135,'6096.25'],[181,'6093.75'],[226,'6091.00'],[271,'6088.25']].forEach(([y, t]) => { s += axisLabel(398, y, t); });
  s += pxBox(397, 95, 33, '6098.75', '#e83030', '#fff', { b: 1, size: 8 });
  document.getElementById('chart-f5').innerHTML = s;
}

/* ---------------- F2 TPO chart ---------------- */
function drawF2() {
  let s = rect(7, 302, 427, 355, '#fff') + rect(8, 302, 390, 335, BG);
  [[52,106],[282,378],[450,524],[670,764],[828,900],[984,1056]].forEach(([a, b]) => { s += rect(Z2.x(112), Z2.y(a), Z2.s(976), Z2.s(b - a), '#aeeceb'); });
  [[92,'6128.00'],[298,'6116.25'],[363,'6110.25'],[465,'6105.25'],[507,'6100.75'],[687,'6090.75'],[748,'6085.00'],[844,'6080.50'],[885,'6076.00'],[1001,'6070.25']].forEach(([y, t]) => { s += txt(Z2.x(115), Z2.y(y) + 2.5, t, 7, '#333'); });
  s += txt(26, 339, 'F2', 18, '#e6e2da', { b: 1 });
  s += rect(8, 336.5, 391, 1.5, '#9a9180');

  const edges = [1148,1148,1148,1148,1140,1145,1148,1150,1155,1165,1168,1168,1170,1170,1170,1172,1172,1172,1172,1172,1170,1170,1172,1175,1175,1175,1175,1172,1170,1162,1145,1135,1135,1120,1105,1105,1110,1120,1130,1128,1125,1130,1150,1155,1150,1130,1125,1125,1115,1112,1112,1115,1112,1120,
    1125,1122,1122,1125,1130,1135,1140,1145,1145,1145,1140,1140,1140,1140,1140,1130].map(e => 1192 - e);
  s += barsFromRight(397.4, 307.3, 4.8, edges, i => i < 54 ? ORG : GLD);
  const lw = [35,55,70,72,82,75,80,80,68,94,70,88,80,82,98,78,75,70,68,105,55];
  s += barsFromLeft(8, 436.7, 4.8, lw.map(v => v - 24), 1 / 3, i => i < 2 ? '#7a0a0a' : i < 4 ? '#8a4a08' : i > 18 ? '#7a2a08' : i > 16 ? '#8a4a08' : '#857a00');

  const cols = [[544,[[662,'P','r'],[685,'PQR','r'],[708,'NPQ','r'],[731,'NPQ','r'],[754,'NPQ','r',665],[777,'MNP','r'],[800,'MNP','r'],[823,'KMN','k'],[846,'KMN','k'],[869,'JKLMN','k'],[891,'GJKLMN','k'],[914,'GJKLMN','k',680],[937,'FGIJKLN','k'],[960,'FGHIJ','k',675],[983,'FGHIJ','m',685],[1005,'FGHIJ','k',652],[1028,'FGHIJ','k',640]]],
    [708,[[502,'ghijk','r'],[525,'ghijk','r',835],[548,'gjkl','k',787],[571,'efgjkl','k',822],[594,'efkl','k',795],[617,'WXbcdel','k',862],[640,'WXYZabcde','g',895],[663,'WXYZacd','m',900],[686,'TVWXYZa','k'],[708,'TVWX','k'],[731,'TV','k',785],[754,'TV','b']]],
    [922,[[459,'p','r'],[481,'np','r',973],[504,'npq','k',1025],[527,'npqry','k',1015],[550,'mnpqry','m',1065],[572,'mnqrsxy','k',1060],[595,'msxy','k',1058],[618,'mstx','g',1018],[640,'mstx','k',1008],[663,'mtvwx','k',1040],[686,'tvwx','k',1048],[708,'tvwx','k',1040],[731,'vw','k',1068],[754,'vw','b']]]];
  const tc = { r: '#f02020', k: '#111', m: '#ee22ee', g: '#1f9a2a', b: '#1a2ee0' };
  cols.forEach(([x0, rows]) => rows.forEach(([y, letters, c, end]) => {
    if (end) s += rect(Z2.x(x0), Z2.y(y - 10), Z2.s(end - x0), Z2.s(20), '#c4c4c4');
    const xs = [...letters].map((_, i) => +(Z2.x(x0) + i * 7.5).toFixed(1)).join(' ');
    s += `<text class="tpo" x="${xs}" y="${+(Z2.y(y) + 2.5).toFixed(2)}" fill="${tc[c]}">${letters}</text>`;
  }));
  [[686,822,1056,'#e88a80'],[702,685,735,'#d92020'],[915,470,645,'#d92020'],[900,548,728,'#e88a80'],[1066,502,728,'#e88a80']].forEach(([x, a, b, c]) => { s += rect(Z2.x(x), Z2.y(a), .9, Z2.s(b - a), c); });
  s += dia(Z2, [[695,683],[908,600]], '#000', 2.4);
  s += poly([[Z2.x(1066), Z2.y(550)], [Z2.x(1074), Z2.y(544)], [Z2.x(1074), Z2.y(556)]], '#000');

  s += rect(8, 637, 391, 1, '#777') + rect(398, 302, 1, 336, '#777') + rect(402.5, 302, 1, 355, '#888');
  [[221,'6120.50'],[389,'6109.50'],[556,'6098.50'],[724,'6087.50'],[891,'6076.50'],[1049,'6065.50']].forEach(([y, t]) => { s += txt(Z2.x(1200), +(Z2.y(y) + 2.5).toFixed(2), t, 7, '#444'); });
  s += rect(407, 336.5, 27, 9, '#b0b0b0') + txt(407.5, 343.5, '6124.75', 7, '#333');
  [[207,'18:00','02/04'],[544,'09:30','02/05'],[708,'18:00','02/05'],[922,'03:00','02/06']].forEach(([x, a, b]) => { s += txt(Z2.x(x), 645, a, 7, '#444') + txt(Z2.x(x), 651, b, 7, '#444'); });
  s += rect(402.5, 648, 31.5, 9, '#a8a8a8') + txt(403, 655, '02/06 08:1', 7, '#333');
  document.getElementById('chart-f2').innerHTML = s;
}
drawMain();
drawF5();
drawF2();
```
